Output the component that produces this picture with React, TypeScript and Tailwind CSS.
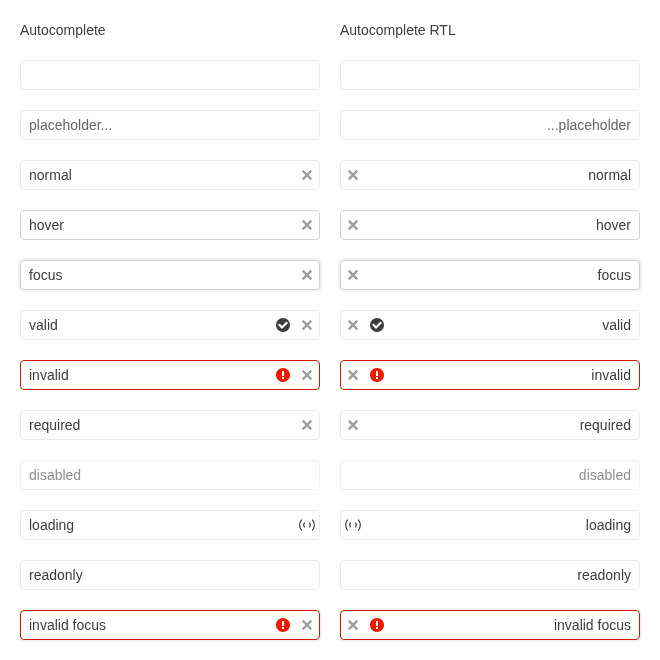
import React from 'react';
import clsx from 'clsx';

type Kind = 'clear' | 'valid' | 'invalid' | 'loading';

interface Field {
  text: string;
  rtlText?: string;
  box?: string;
  textClass?: string;
  icons?: Kind[];
}

const NORMAL = 'border-[#ebebeb]';

const fields: Field[] = [
  { text: '' },
  { text: 'placeholder...', rtlText: '...placeholder', textClass: 'text-[#666666]' },
  { text: 'normal', icons: ['clear'] },
  { text: 'hover', icons: ['clear'], box: 'border-[#d2d2d2]' },
  { text: 'focus', icons: ['clear'], box: 'border-[#d0d0d0] shadow-[0_0_0_2px_rgba(0,0,0,0.06)]' },
  { text: 'valid', icons: ['valid', 'clear'] },
  { text: 'invalid', icons: ['invalid', 'clear'], box: 'border-[#cc1800]' },
  { text: 'required', icons: ['clear'] },
  { text: 'disabled', box: 'border-[#f0f0f0]', textClass: 'text-[#8f8f8f]' },
  { text: 'loading', icons: ['loading'] },
  { text: 'readonly' },
  { text: 'invalid focus', icons: ['invalid', 'clear'], box: 'border-[#cc1800] shadow-[0_0_0_2px_rgba(0,0,0,0.05)]' },
];

function Icon({ kind }: { kind: Kind }) {
  if (kind === 'loading') {
    return (
      <svg viewBox="0 0 16 16" className="size-4 text-[#3d3d3d]" fill="none" stroke="currentColor">
        <path d="M2.700 2.600C.300 5.800.300 10.200 2.700 13.400M13.300 2.600c2.400 3.200 2.400 7.600 0 10.800" strokeWidth="1.200" />
        <path d="M5.600 5.600c-1.200 1.500-1.200 3.300 0 4.800M10.400 5.600c1.200 1.500 1.200 3.300 0 4.800" strokeWidth="1.100" />
      </svg>
    );
  }
  if (kind === 'clear') {
    return (
      <svg viewBox="0 0 16 16" className="size-4 text-[#9e9e9e]" fill="none" stroke="currentColor">
        <path d="m3.700 3.700 8.600 8.600M12.300 3.700l-8.600 8.600" strokeWidth="2.400" />
      </svg>
    );
  }
  if (kind === 'valid') {
    return (
      <svg viewBox="0 0 16 16" className="size-4" fill="none">
        <circle cx="8" cy="8" r="7" fill="#3d3d3d" />
        <path d="m3.800 7.300 3.200 3.200 5.300-5.300" stroke="white" strokeWidth="2.200" />
      </svg>
    );
  }
  return (
    <svg viewBox="0 0 512 512" className="size-4 text-[#f31700]" fill="currentColor">
      <path d="M256 32C132.300 32 32 132.300 32 256s100.300 224 224 224 224-100.300 224-224S379.700 32 256 32zm32 352h-64v-64h64v64zm0-96h-64V128h64v160z" />
    </svg>
  );
}

function Autocomplete({ field, rtl }: { field: Field; rtl: boolean }) {
  return (
    <div
      className={clsx(
        'flex h-[30px] w-[300px] items-center rounded-[4px] border',
        field.box ?? NORMAL,
      )}
    >
      <span className={clsx('flex-1 px-2 leading-5', field.textClass)}>
        <bdi>{rtl ? (field.rtlText ?? field.text) : field.text}</bdi>
      </span>
      <span className="flex items-center gap-2 pe-1">
        {field.icons?.map((kind) => <Icon key={kind} kind={kind} />)}
      </span>
    </div>
  );
}

function Column({ title, rtl = false }: { title: string; rtl?: boolean }) {
  return (
    <section className="flex w-[300px] flex-col gap-5">
      <h2 className="leading-5">{title}</h2>
      <div dir={rtl ? 'rtl' : 'ltr'} className="flex flex-col gap-5">
        {fields.map((field, i) => (
          <Autocomplete key={i} field={field} rtl={rtl} />
        ))}
      </div>
    </section>
  );
}

export default function App() {
  return (
    <main className="flex h-[660px] w-[660px] gap-5 p-5 font-['Liberation_Sans',Arial,sans-serif] text-[14px] text-[#3d3d3d] will-change-transform">
      <Column title="Autocomplete" />
      <Column title="Autocomplete RTL" rtl />
    </main>
  );
}
